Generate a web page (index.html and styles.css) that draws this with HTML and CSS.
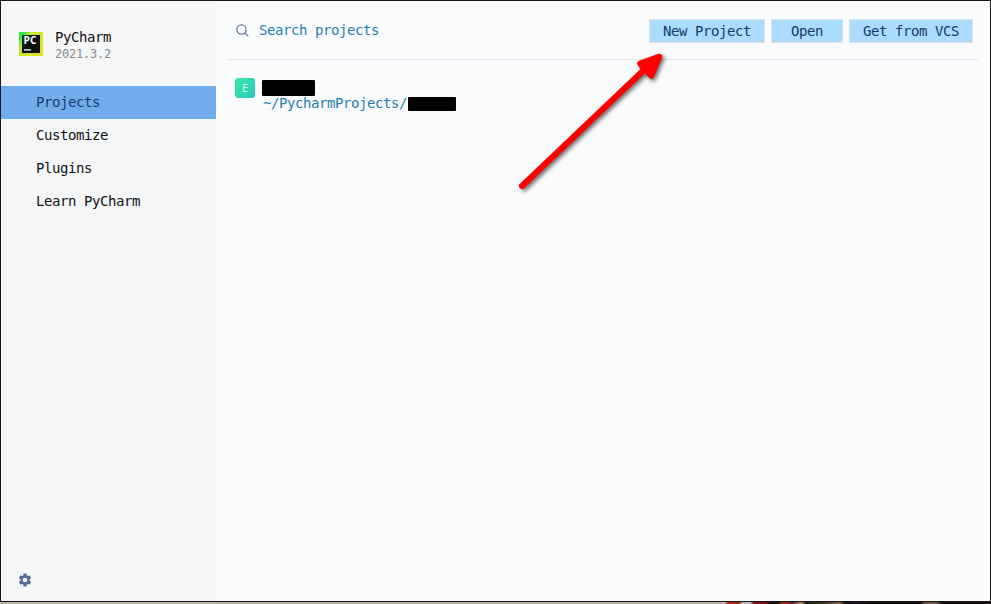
FILE: index.html
```html
<!DOCTYPE html>
<html lang="en">
<head>
<meta charset="utf-8">
<title>Welcome to PyCharm</title>
<link rel="stylesheet" href="styles.css">
</head>
<body>
<div class="window">
  <aside class="sidebar">
    <header class="brand">
      <svg class="logo" viewBox="0 0 24 24">
        <defs>
          <linearGradient id="lg" x1="0" y1="0" x2="1" y2="0.7"><stop offset="0" stop-color="#21e06c"/><stop offset=".15" stop-color="#35e34c"/><stop offset=".35" stop-color="#c5ea22"/><stop offset="1" stop-color="#e3df28"/></linearGradient>
          <linearGradient id="dk" x1="0" y1="0" x2="1" y2="1"><stop offset="0" stop-color="#06391c"/><stop offset=".5" stop-color="#050b08"/><stop offset="1" stop-color="#101806"/></linearGradient>
        </defs>
        <rect width="24" height="24" fill="url(#lg)"/>
        <rect x="3" y="3" width="18" height="18" fill="url(#dk)"/>
        <text class="logo-text" x="4.5" y="12" textLength="13" lengthAdjust="spacingAndGlyphs">PC</text>
        <rect x="5" y="17" width="7" height="1.8" fill="#b9bcba"/>
      </svg>
      <div>
        <div class="name">PyCharm</div>
        <div class="version">2021.3.2</div>
      </div>
    </header>
    <nav class="nav">
      <a class="item active">Projects</a>
      <a class="item">Customize</a>
      <a class="item">Plugins</a>
      <a class="item">Learn PyCharm</a>
    </nav>
    <svg class="gear" viewBox="0 0 14 14">
      <path fill="#51699b" fill-rule="evenodd" d="M5.6 .5h2.8l.4 1.9 1 .6 1.9-.6 1.4 2.5-1.5 1.4v1.4l1.5 1.4-1.4 2.5-1.9-.6-1 .6-.4 1.9H5.6l-.4-1.9-1-.6-1.9.6L.9 9.1l1.5-1.4V6.3L.9 4.9l1.4-2.500 1.9.6 1-.6zM7 4.7a2.3 2.3 0 1 0 0 4.6 2.3 2.3 0 0 0 0-4.6z"/>
    </svg>
  </aside>
  <main class="main">
    <div class="toolbar">
      <svg class="search-icon" viewBox="0 0 14 14" fill="none" stroke="#6277a8" stroke-width="1.25"><circle cx="5.5" cy="5.5" r="4.6"/><path d="M8.8 8.8l3.4 3.4"/></svg>
      <span class="search">Search projects</span>
      <button class="btn new">New Project</button>
      <button class="btn open">Open</button>
      <button class="btn vcs">Get from VCS</button>
    </div>
    <div class="project">
      <div class="avatar">E</div>
      <div>
        <div class="redacted title"></div>
        <div class="path">~/PycharmProjects/<span class="redacted tail"></span></div>
      </div>
    </div>
  </main>
</div>
<div class="desktop"></div>
<svg class="arrow" viewBox="0 0 180 160">
  <path d="M22 146L145 29" stroke="#f00" stroke-width="6" stroke-linecap="round"/>
  <path d="M159.5 16.5L140 23.3L144 29L151.3 36Z" fill="#f00" stroke="#f00" stroke-width="5.6" stroke-linejoin="round"/>
</svg>
</body>
</html>
```
FILE: styles.css
```css
* { box-sizing: border-box; }
body {
  margin: 0;
  width: 991px;
  height: 604px;
  overflow: hidden;
  position: relative;
  font: 14px/16px "DejaVu Sans Mono", monospace;
  letter-spacing: -0.428px;
  color: #121314;
}
.window {
  display: flex;
  height: 602px;
  border: 1px solid #1b1516;
  background: #fafbfd;
}
.sidebar {
  width: 215px;
  background: #f4f6f8;
  display: flex;
  flex-direction: column;
}
.brand {
  display: flex;
  height: 85px;
  padding: 28px 0 0 18px;
  gap: 12px;
}
.logo { width: 24px; height: 24px; margin-top: 3px; }
.logo-text { font: bold 10px "Open Sans", sans-serif; letter-spacing: 0; fill: #fff; }
.version {
  font-size: 12px;
  letter-spacing: -0.224px;
  line-height: 19px;
  color: #888a8c;
}
.item { display: block; height: 33px; padding-left: 35px; line-height: 33px; }
.active { background: #73aceb; color: #103a76; }
.gear { width: 14px; height: 14px; margin: auto 0 14px 17px; }
.main { flex: 1; padding: 0 12px; }
.toolbar {
  display: flex;
  height: 59px;
  padding: 18px 5px 0 8px;
  border-bottom: 1px solid #e1e3ea;
}
.search-icon { width: 14px; height: 14px; margin-top: 5px; }
.search { color: #2380ad; margin: 3px auto 0 9px; }
.btn {
  height: 24px;
  padding: 0;
  border: 1px solid #dde3ef;
  background: #a9dcff;
  color: #17396d;
  font: inherit;
  letter-spacing: inherit;
}
.new { width: 116px; }
.open { width: 72px; margin: 0 6px; }
.vcs { width: 124px; }
.project { display: flex; padding: 18px 0 0 7px; gap: 7px; }
.avatar {
  width: 20px;
  height: 20px;
  border-radius: 3px;
  background: linear-gradient(135deg, #36eba8, #2cc7bd);
  color: #dffaf3;
  font: 10px/21px "DejaVu Sans Mono", monospace;
  letter-spacing: 0;
  text-align: center;
}
.redacted { background: #000; border-radius: 1px; }
.title { width: 53px; height: 16px; margin-top: 2px; }
.path { display: flex; margin-top: -1px; padding-left: 1px; color: #2380ad; }
.tail { width: 48px; height: 14px; margin: 2px 0 0 1px; }
.desktop {
  height: 2px;
  background: linear-gradient(90deg, #b9b3a6 0 725px, #b02a1c 728px 740px, #c0b8b4 742px 750px, #7a1411 754px 765px, #20100c 770px 778px, #a52318 782px 788px, #4d1a14 792px, #a58068 800px 802px, #191c10 806px, #3d381e 825px, #80664a 840px, #120c12 845px, #1b1528 856px, #100a0e 870px 920px, #6b554b 925px 937px, #100b0c 942px);
}
.arrow {
  position: absolute;
  left: 500px;
  top: 40px;
  width: 180px;
  height: 160px;
  fill: none;
  filter: drop-shadow(2px 2px 2px rgba(0, 0, 0, .6));
}
```
